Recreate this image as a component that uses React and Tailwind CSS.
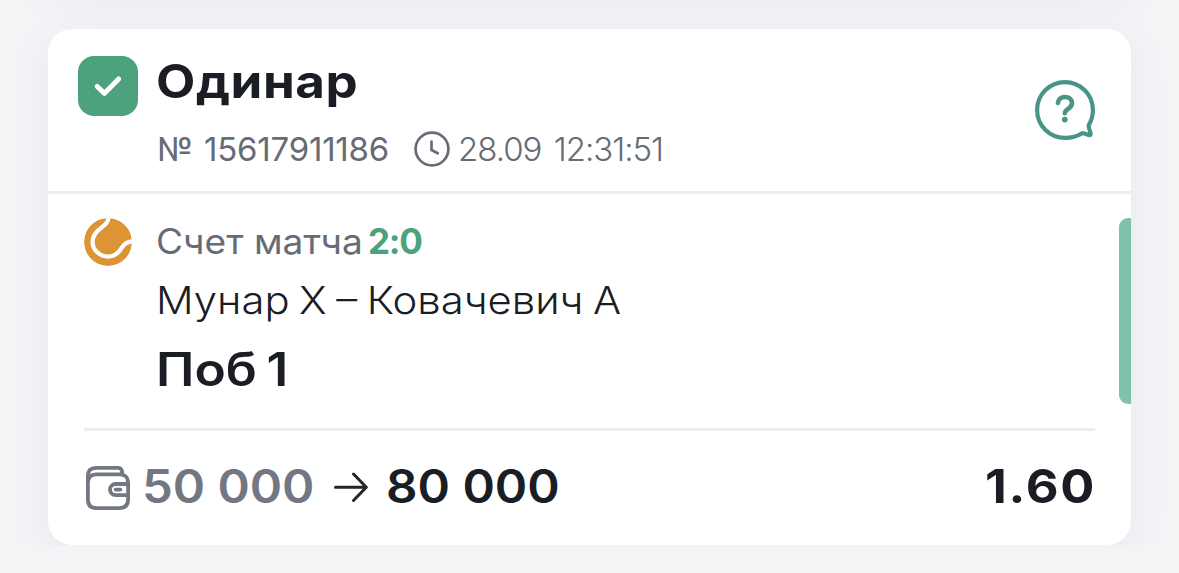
const INK = "text-[#1b1d24]";

function CheckBadge() {
  return (
    <div className="flex h-[60px] w-[60px] shrink-0 items-center justify-center rounded-[16px] bg-[#4ca27c]">
      <svg viewBox="0 0 60 60" className="h-full w-full" fill="none" aria-hidden="true">
        <path d="M19.2 30.5 26.5 37.3 40.7 23" stroke="#fff" strokeWidth="5" strokeLinecap="round" strokeLinejoin="round" />
      </svg>
    </div>
  );
}

function ClockIcon() {
  return (
    <svg viewBox="0 0 36 36" className="h-9 w-9 shrink-0 text-[#676b75]" fill="none" stroke="currentColor" strokeWidth="2.7" strokeLinecap="round" strokeLinejoin="round" aria-hidden="true">
      <circle cx="18" cy="18" r="16.4" />
      <path d="M17.5 10.5V19L23.7 22.3" />
    </svg>
  );
}

function HelpIcon() {
  return (
    <svg viewBox="0 0 60 60" className="h-[60px] w-[60px] text-[#489588]" fill="none" stroke="currentColor" strokeWidth="4.2" strokeLinecap="round" strokeLinejoin="round" aria-hidden="true">
      <path d="M47 53.2C42.2 56.3 36.3 57.9 30 57.9C14.5 57.9 2.1 45.5 2.1 30S14.5 2.1 30 2.1S57.9 14.5 57.9 30C57.9 35.5 56.5 40.5 54 44.6C53.3 45.8 53.8 47.3 54.3 49L55.5 53.2C56 54.8 55.2 55.4 53.6 55L49.5 53.6C48.5 53.2 47.7 52.8 47 53.2Z" />
      <path d="M22.9 22.9C23.6 18.9 26.5 17 30 17C34.2 17 37 19.6 37 23.2C37 28.6 29.8 28.8 29.8 33.2" strokeWidth="4.6" />
      <circle cx="29.8" cy="39.6" r="2.9" fill="currentColor" stroke="none" />
    </svg>
  );
}

function TennisBall() {
  return (
    <svg viewBox="0 0 48 48" className="h-12 w-12 shrink-0" fill="none" aria-hidden="true">
      <defs>
        <clipPath id="ball">
          <circle cx="24" cy="24" r="24" />
        </clipPath>
      </defs>
      <g clipPath="url(#ball)">
        <circle cx="24" cy="24" r="24" fill="#dc9434" />
        <path d="M24.6 -2C24.8 6.5 18 8 13 13.5C7 20.2 7.2 28.5 13 34C19.5 40.3 28.8 39.8 34.5 34C38.5 30 39.5 23.2 50 23.2" stroke="#fff" strokeWidth="4.2" />
      </g>
    </svg>
  );
}

function WalletIcon() {
  return (
    <svg viewBox="0 0 44 44" className="h-11 w-11 shrink-0 text-[#727782]" fill="none" stroke="currentColor" strokeWidth="3.8" strokeLinecap="round" strokeLinejoin="round" aria-hidden="true">
      <path d="M1.9 17C1.9 11 5 8.300 10 8.300H34C39 8.300 42.1 11.5 42.1 16.5V33C42.1 39 39 42.1 33.5 42.1H10.5C5 42.1 1.9 39 1.9 33.5V10C1.9 4.8 4.8 1.9 10 1.9H32C35 1.9 36.3 3.5 36.300 7.5" />
      <path d="M42 18H30C22 18 22 29.2 30 29.2H42" />
      <path d="M29.500 23.600H34.5" strokeWidth="3.6" />
    </svg>
  );
}

function ArrowIcon() {
  return (
    <svg viewBox="0 0 34 30" className="mb-[2px] h-[30px] w-[34px] shrink-0" fill="none" stroke="#242429" strokeWidth="3" strokeLinecap="round" strokeLinejoin="round" aria-hidden="true">
      <path d="M1.5 15.3H32M19.5 2 32.3 15.3 19.5 28.5" />
    </svg>
  );
}

function BetHeader() {
  return (
    <header className="flex h-[165px] items-start border-b-[3px] border-[#ededee] pl-[30px] pr-9">
      <div className="pt-[27px]">
        <CheckBadge />
      </div>
      <div className="ml-[18px] flex-1 pt-[22px]">
        <h1 className={`text-[46px] leading-[60px] font-bold tracking-[0.5px] whitespace-nowrap ${INK}`}>
          <span className="inline-block origin-left scale-x-[1.11]">Одинар</span>
        </h1>
        <div className="mt-5 flex h-9 items-center text-[33px] leading-9 whitespace-nowrap text-[#676b75]">
          <span className="w-[258px] pl-px font-normal tracking-[-0.2px] [word-spacing:2px]">№ 15617911186</span>
          <ClockIcon />
          <span className="ml-[8px] font-light tracking-[-1px] [word-spacing:4px]">28.09 12:31:51</span>
        </div>
      </div>
      <button type="button" className="mt-[51px]" aria-label="?">
        <HelpIcon />
      </button>
    </header>
  );
}

function BetEvent() {
  return (
    <section className="flex h-[234px] pl-9">
      <div className="pt-6">
        <TennisBall />
      </div>
      <div className="ml-6 flex-1 whitespace-nowrap">
        <div className="mt-[23px] flex h-12 items-center text-[35px] leading-[48px]">
          <div className="w-[212px] text-[#676b75]">
            <span className="inline-block origin-left scale-x-[1.06]">Счет матча</span>
          </div>
          <span className="font-bold tracking-[-1.3px] text-[#4ca27c]">2:0</span>
        </div>
        <div className={`mt-[10px] text-[38px] leading-[50px] font-light ${INK}`}>
          <span className="inline-block origin-left scale-x-[1.1] [word-spacing:-2px]">Мунар Х – Ковачевич А</span>
        </div>
        <div className={`mt-[14px] text-[46px] leading-[60px] font-semibold ${INK}`}>
          <span className="inline-block origin-left scale-x-[1.12] [word-spacing:-3px]">Поб 1</span>
        </div>
      </div>
      <div className="mt-6 h-[186px] w-3 rounded-l-[9px] bg-[#7fc2aa]" />
    </section>
  );
}

function BetTotals() {
  return (
    <footer className="mx-9 flex h-[117px] items-center border-t-[3px] border-[#ededee] text-[46px] leading-[60px] font-semibold whitespace-nowrap">
      <div className="ml-[2px]">
        <WalletIcon />
      </div>
      <div className="ml-3 w-48 pb-1 text-[#727782]">
        <span className="inline-block origin-left scale-x-[1.065]">50 000</span>
      </div>
      <ArrowIcon />
      <div className={`ml-[18px] pb-1 ${INK}`}>
        <span className="inline-block origin-left scale-x-[1.07]">80 000</span>
      </div>
      <div className={`ml-auto pb-1 font-bold ${INK}`}>
        <span className="-mr-px inline-block origin-right scale-x-[1.1] tracking-[1.6px]">1.60</span>
      </div>
    </footer>
  );
}

export default function App() {
  return (
    <div className="h-[573px] w-[1179px] overflow-hidden bg-[#f3f4f6] font-['Inter','Noto_Sans',sans-serif]">
      <div className="h-[545px] overflow-hidden px-12">
        <div className="-mt-12 h-12 rounded-[24px] shadow-[0_4px_36px_#eaebf0]" />
        <article className="mt-[29px] h-[516px] overflow-hidden rounded-[24px] bg-white shadow-[0_10px_36px_#e7e8ee]">
          <BetHeader />
          <BetEvent />
          <BetTotals />
        </article>
      </div>
    </div>
  );
}
